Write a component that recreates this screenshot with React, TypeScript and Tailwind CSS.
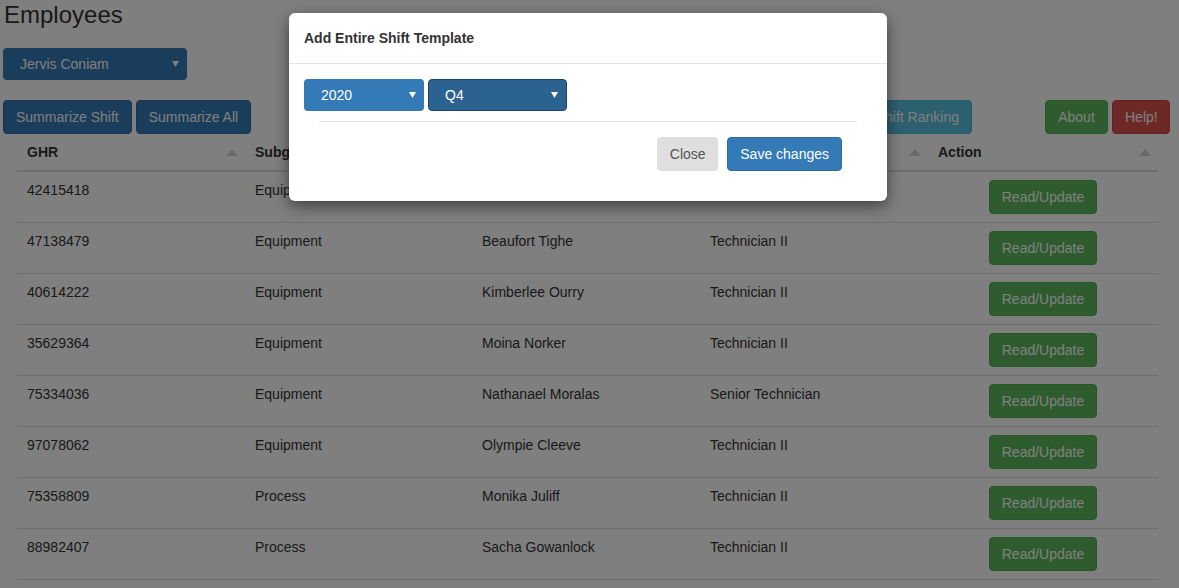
import React from "react";

type Row = { ghr: string; subgroup: string; name: string; job: string };

const rows: Row[] = [
  { ghr: "42415418", subgroup: "Equipment", name: "Jervis Coniam", job: "Technician II" },
  { ghr: "47138479", subgroup: "Equipment", name: "Beaufort Tighe", job: "Technician II" },
  { ghr: "40614222", subgroup: "Equipment", name: "Kimberlee Ourry", job: "Technician II" },
  { ghr: "35629364", subgroup: "Equipment", name: "Moina Norker", job: "Technician II" },
  { ghr: "75334036", subgroup: "Equipment", name: "Nathanael Moralas", job: "Senior Technician" },
  { ghr: "97078062", subgroup: "Equipment", name: "Olympie Cleeve", job: "Technician II" },
  { ghr: "75358809", subgroup: "Process", name: "Monika Juliff", job: "Technician II" },
  { ghr: "88982407", subgroup: "Process", name: "Sacha Gowanlock", job: "Technician II" },
];

const headers = ["GHR", "Subgroup", "Name", "Job Title", "Action"];

function Caret() {
  return (
    <svg width="7" height="6" viewBox="0 0 7 6" className="shrink-0">
      <path d="M0 0 H7 L3.5 6 Z" fill="#ffffff" />
    </svg>
  );
}

function SortArrow() {
  return (
    <svg width="12" height="7" viewBox="0 0 12 7" className="shrink-0">
      <path d="M6 0 L12 7 H0 Z" fill="#d2d2d2" />
    </svg>
  );
}

function Btn({ className, children }: { className: string; children: React.ReactNode }) {
  return (
    <button
      type="button"
      className={`h-[34px] rounded-[4px] border px-[12px] text-[14px] leading-[20px] text-white ${className}`}
    >
      {children}
    </button>
  );
}

export default function App() {
  return (
    <div className="relative h-[588px] w-[1179px] overflow-hidden bg-white font-['Liberation_Sans',Arial,sans-serif] text-[14px] text-[#333]">
      <div className="px-[3px]">
        <h2 className="mt-[2px] pl-[1px] text-[24px] leading-[26px] text-[#333]">Employees</h2>

        <div className="mt-[20px] flex h-[32px] w-[184px] items-center justify-between rounded-[4px] bg-[#337ab7] pl-[17px] pr-[8px] text-white">
          <span>Jervis Coniam</span>
          <Caret />
        </div>

        <div className="mt-[20px] flex items-center">
          <Btn className="border-[#2e6da4] bg-[#337ab7]">Summarize Shift</Btn>
          <Btn className="ml-[4px] border-[#2e6da4] bg-[#337ab7]">Summarize All</Btn>
          <div className="flex-1" />
          <Btn className="border-[#46b8da] bg-[#5bc0de]">Shift Ranking</Btn>
          <div className="w-[73px]" />
          <Btn className="w-[63px] border-[#4cae4c] bg-[#5cb85c]">About</Btn>
          <Btn className="ml-[4px] w-[58px] border-[#d43f3a] bg-[#d9534f]">Help!</Btn>
          <div className="w-[6px]" />
        </div>
      </div>

      <table className="ml-[17px] w-[1141px] table-fixed border-collapse text-left">
        <colgroup>
          <col className="w-[228px]" />
          <col className="w-[227px]" />
          <col className="w-[228px]" />
          <col className="w-[228px]" />
          <col />
        </colgroup>
        <thead>
          <tr className="border-b-2 border-[#dddddd]">
            {headers.map((h) => (
              <th key={h} className="py-[8px] pl-[10px] pr-[7px] font-bold leading-[20px]">
                <div className="flex items-center justify-between">
                  <span>{h}</span>
                  <SortArrow />
                </div>
              </th>
            ))}
          </tr>
        </thead>
        <tbody>
          {rows.map((r) => (
            <tr key={r.ghr} className="border-b border-[#dddddd] align-top">
              <td className="px-[10px] py-[8px] leading-[20px]">{r.ghr}</td>
              <td className="px-[10px] py-[8px] leading-[20px]">{r.subgroup}</td>
              <td className="px-[10px] py-[8px] leading-[20px]">{r.name}</td>
              <td className="px-[10px] py-[8px] leading-[20px]">{r.job}</td>
              <td className="px-[10px] py-[8px] text-center leading-[20px]">
                <Btn className="border-[#4cae4c] bg-[#5cb85c]">Read/Update</Btn>
              </td>
            </tr>
          ))}
        </tbody>
      </table>

      <div className="absolute inset-0 bg-black/50" />

      <div className="absolute left-[289px] top-[13px] w-[598px] rounded-[6px] bg-white shadow-[0_5px_15px_rgba(0,0,0,0.5)]">
        <div className="h-[51px] border-b border-[#e5e5e5] px-[15px] pt-[15px]">
          <h4 className="text-[14px] font-bold leading-[20px] text-[#333]">Add Entire Shift Template</h4>
        </div>
        <div className="p-[15px]">
          <div className="flex gap-[4px]">
            <div className="flex h-[32px] w-[120px] items-center justify-between rounded-[4px] bg-[#337ab7] pl-[17px] pr-[8px] text-white">
              <span>2020</span>
              <Caret />
            </div>
            <div className="flex h-[32px] w-[139px] items-center justify-between rounded-[4px] border border-[#1d4266] bg-[#2c6290] pl-[16px] pr-[8px] text-white">
              <span>Q4</span>
              <Caret />
            </div>
          </div>
          <div className="mx-[15px] mt-[10px] flex justify-end gap-[9px] border-t border-[#e5e5e5] p-[15px]">
            <button
              type="button"
              className="h-[34px] w-[61px] rounded-[4px] bg-[#dfdfdf] text-[14px] leading-[20px] text-[#555]"
            >
              Close
            </button>
            <Btn className="border-[#2e6da4] bg-[#337ab7]">Save changes</Btn>
          </div>
        </div>
      </div>
    </div>
  );
}
